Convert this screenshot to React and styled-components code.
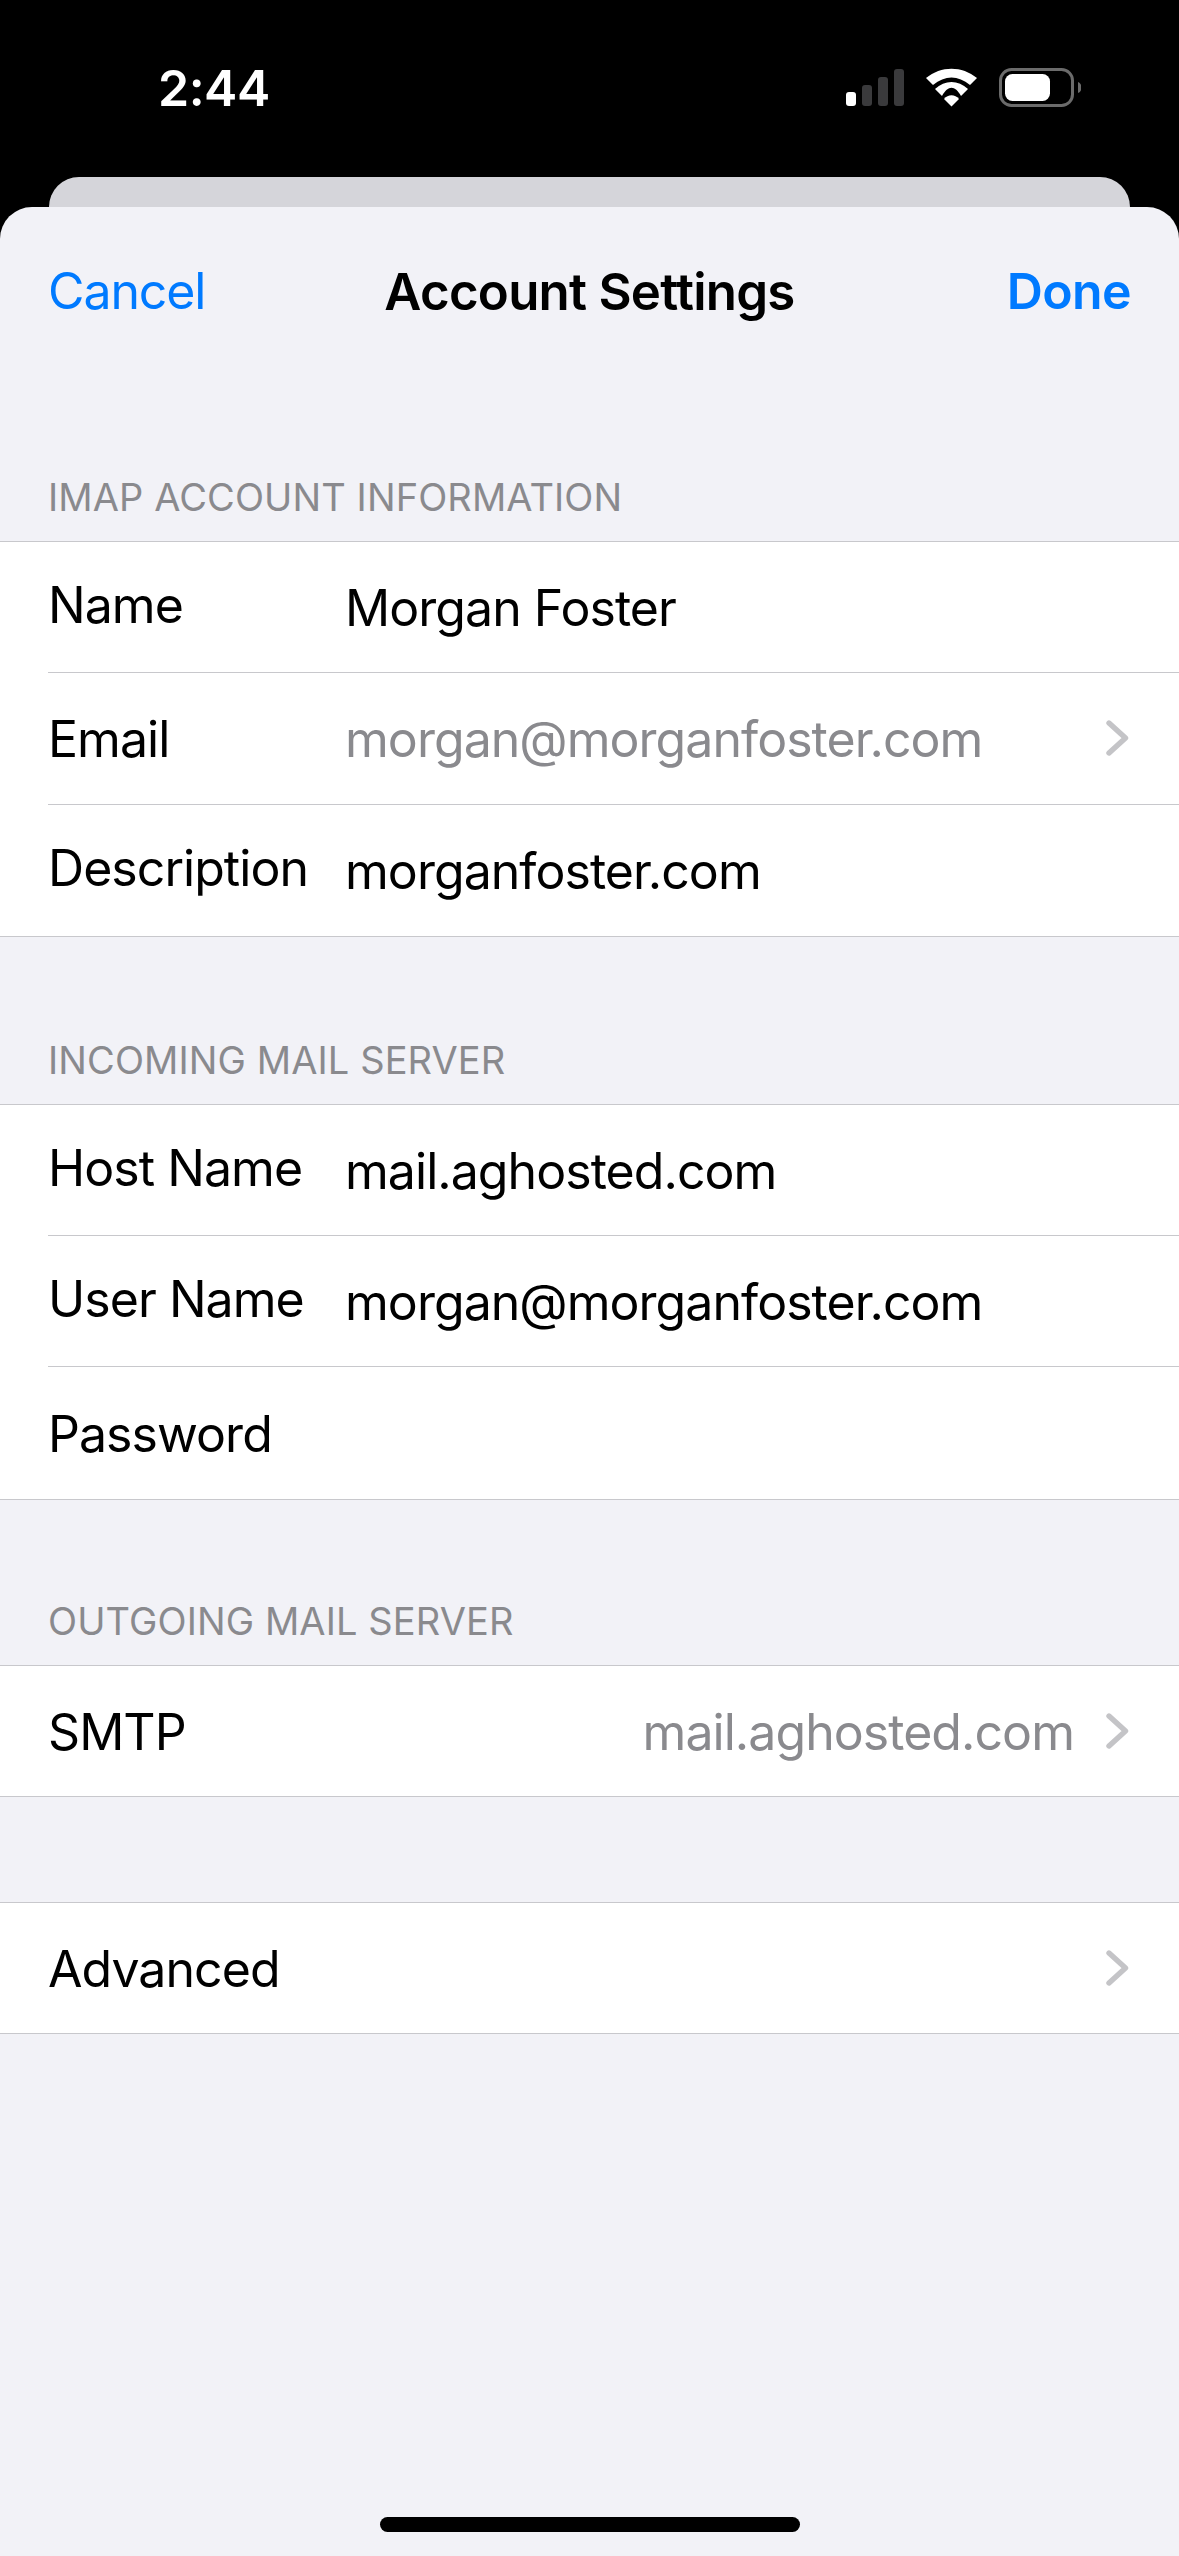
import React from 'react';
import styled, { createGlobalStyle } from 'styled-components';

const Global = createGlobalStyle`
  html, body { margin: 0; padding: 0; background: #000; }
  body { font-family: Inter, "Liberation Sans", sans-serif; -webkit-font-smoothing: antialiased; }
`;

const Screen = styled.div`
  width: 1179px;
  height: 2556px;
  background: #000;
  display: flex;
  flex-direction: column;
  overflow: hidden;
`;

const StatusBar = styled.div`
  height: 177px;
  flex: none;
  box-sizing: border-box;
  padding: 61px 98px 0 158px;
  display: flex;
  justify-content: space-between;
  align-items: flex-start;
`;

const Clock = styled.div`
  color: #fff;
  font-size: 50px;
  font-weight: 600;
  line-height: 54px;
  letter-spacing: -0.5px;
`;

const StatusIcons = styled.div`
  padding-top: 7px;
  line-height: 0;
`;

const BackCard = styled.div`
  flex: none;
  height: 30px;
  margin: 0 49px;
  background: #d5d5da;
  border-radius: 30px 30px 0 0;
`;

const Sheet = styled.div`
  flex: 1;
  background: #f2f2f7;
  border-radius: 32px 32px 0 0;
  display: flex;
  flex-direction: column;
`;

const NavBar = styled.div`
  height: 168px;
  flex: none;
  box-sizing: border-box;
  padding: 0 48px;
  display: grid;
  grid-template-columns: 1fr auto 1fr;
  align-items: center;
`;

const NavButton = styled.div`
  color: #007aff;
  font-size: 50px;
  letter-spacing: ${(p) => (p.$bold ? '-0.6px' : '-1.1px')};
  font-weight: ${(p) => (p.$bold ? 600 : 400)};
  text-align: ${(p) => (p.$right ? 'right' : 'left')};
`;

const NavTitle = styled.div`
  color: #000;
  font-size: 51px;
  font-weight: 600;
  letter-spacing: -0.75px;
`;

const SectionTitle = styled.div`
  box-sizing: border-box;
  height: ${(p) => p.$height}px;
  padding: 0 48px 21px;
  display: flex;
  align-items: flex-end;
  color: #8a8a8e;
  font-size: 38px;
  letter-spacing: 0.1px;
  line-height: 46px;
`;

const Group = styled.div`
  background: #fff;
  border-top: 1px solid #c8c8cc;
  border-bottom: 1px solid #c8c8cc;
`;

const Row = styled.div`
  box-sizing: border-box;
  height: 131.3px;
  margin-left: 48px;
  padding-right: 50px;
  display: flex;
  align-items: center;
  font-size: 50px;
  letter-spacing: -0.95px;
  color: #000;
  border-bottom: 1px solid #c8c8cc;

  &:last-child {
    border-bottom: none;
  }

  &:only-child {
    height: 130px;
  }
`;

const Label = styled.div`
  width: 297px;
  flex: none;
  white-space: nowrap;
  padding: ${(p) => (p.$raised ? '0 0 5px' : '2px 0 0')};
`;

const Value = styled.div`
  flex: 1;
  white-space: nowrap;
  color: ${(p) => (p.$muted ? '#8a8a8e' : '#000')};
  text-align: ${(p) => (p.$right ? 'right' : 'left')};
  padding-top: ${(p) => (p.$lowered || p.$muted ? 2 : 0)}px;
  padding-right: ${(p) => (p.$right ? 32 : 0)}px;
`;

const Spacer = styled.div`
  height: ${(p) => p.$height}px;
`;

const HomeBar = styled.div`
  width: 420px;
  height: 15px;
  background: #000;
  border-radius: 8px;
  margin: auto auto 24px;
`;

const ChevronIcon = styled.svg`
  flex: none;
`;

const Chevron = () => (
  <ChevronIcon width="23" height="36" viewBox="0 0 23 36">
    <path d="M3 3 L19.5 18 L3 33" fill="none" stroke="#c4c4c7" strokeWidth="5.4" strokeLinecap="round" strokeLinejoin="round" />
  </ChevronIcon>
);

const StatusGlyphs = () => (
  <svg width="235" height="40" viewBox="0 0 235 40">
    <rect x="0" y="24" width="10" height="14" rx="3" fill="#fff" />
    <rect x="16" y="17" width="10" height="21" rx="3" fill="#3a3a3c" />
    <rect x="32" y="9" width="10" height="29" rx="3" fill="#3a3a3c" />
    <rect x="48" y="1" width="10" height="37" rx="3" fill="#3a3a3c" />
    <path d="M80 10 C95 -2.5 116 -2.5 131 10 L124 17 C112 7 99 7 87 17 Z" fill="#fff" />
    <path d="M89 21 C99 11.5 112 11.5 122 21 L115 28 C109 17 102 17 96 28 Z" fill="#fff" />
    <path d="M98 31 C102 26 109 26 113 31 L105.5 38.5 Z" fill="#fff" />
    <rect x="154.5" y="1.5" width="72" height="36" rx="11" fill="none" stroke="#6b6b6b" strokeWidth="3" />
    <rect x="159" y="6" width="45" height="27" rx="7.5" fill="#fff" />
    <path d="M232 14 C234.5 15 235.5 17 235.5 19.5 C235.5 22 234.5 24 232 25 Z" fill="#6b6b6b" />
  </svg>
);

const App = () => (
  <Screen>
    <Global />
    <StatusBar>
      <Clock>2:44</Clock>
      <StatusIcons>
        <StatusGlyphs />
      </StatusIcons>
    </StatusBar>
    <BackCard />
    <Sheet>
      <NavBar>
        <NavButton>Cancel</NavButton>
        <NavTitle>Account Settings</NavTitle>
        <NavButton $bold $right>Done</NavButton>
      </NavBar>
      <SectionTitle $height={166}>IMAP ACCOUNT INFORMATION</SectionTitle>
      <Group>
        <Row>
          <Label $raised>Name</Label>
          <Value $lowered>Morgan Foster</Value>
        </Row>
        <Row>
          <Label>Email</Label>
          <Value $muted>morgan@morganfoster.com</Value>
          <Chevron />
        </Row>
        <Row>
          <Label $raised>Description</Label>
          <Value $lowered>morganfoster.com</Value>
        </Row>
      </Group>
      <SectionTitle $height={167}>INCOMING MAIL SERVER</SectionTitle>
      <Group>
        <Row>
          <Label $raised>Host Name</Label>
          <Value $lowered>mail.aghosted.com</Value>
        </Row>
        <Row>
          <Label $raised>User Name</Label>
          <Value $lowered>morgan@morganfoster.com</Value>
        </Row>
        <Row>
          <Label>Password</Label>
        </Row>
      </Group>
      <SectionTitle $height={165}>OUTGOING MAIL SERVER</SectionTitle>
      <Group>
        <Row>
          <Label>SMTP</Label>
          <Value $muted $right>mail.aghosted.com</Value>
          <Chevron />
        </Row>
      </Group>
      <Spacer $height={105} />
      <Group>
        <Row>
          <Label>Advanced</Label>
          <Value />
          <Chevron />
        </Row>
      </Group>
      <HomeBar />
    </Sheet>
  </Screen>
);

export default App;
